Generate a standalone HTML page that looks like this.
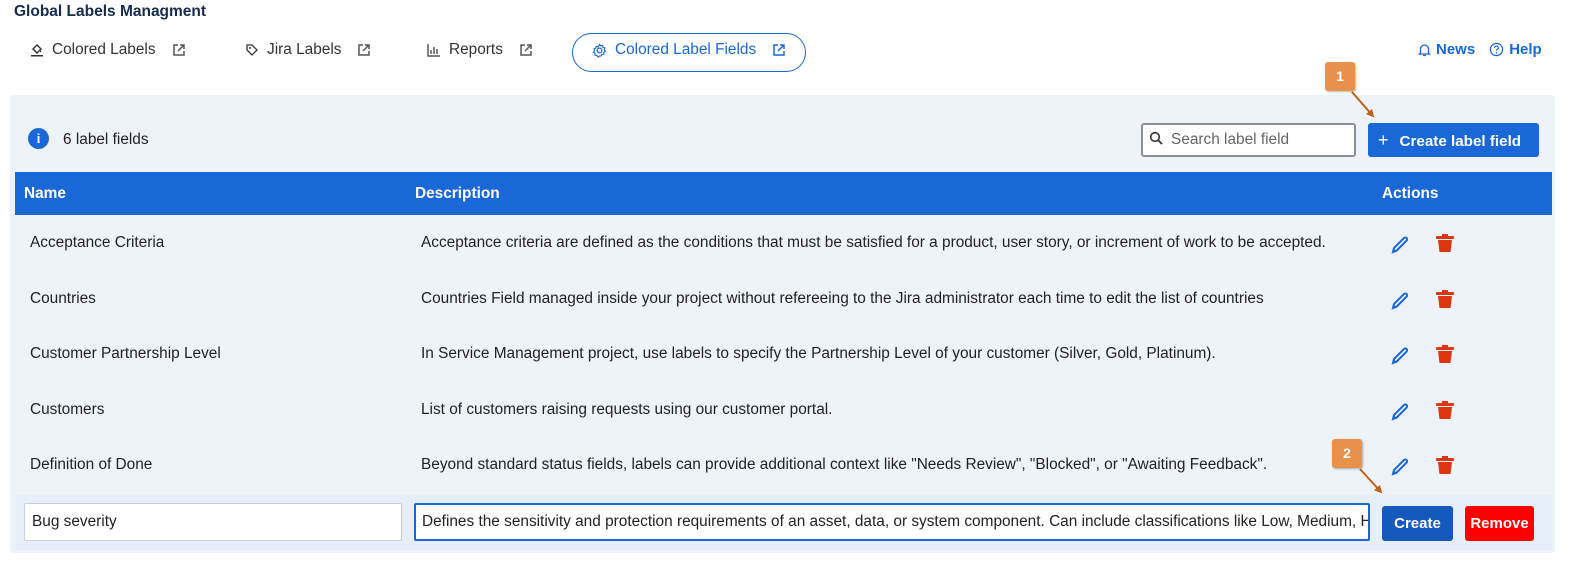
<!DOCTYPE html>
<html><head><meta charset="utf-8"><style>
*{box-sizing:border-box;margin:0;padding:0}
body{width:1591px;height:579px;background:#fff;font-family:"Liberation Sans",sans-serif;color:#172b4d;position:relative;overflow:hidden;font-size:15.4px}
.abs{position:absolute}
.title{left:14px;top:3px;font-size:15.5px;font-weight:bold;color:#172b4d}
.tab{top:41px;font-size:15.4px;color:#333;display:flex;align-items:center;gap:8px;white-space:nowrap}
.pill{left:572px;top:33px;width:234px;height:39px;border:1px solid #1a68d8;border-radius:20px}
.panel{left:10px;top:95px;width:1545px;height:458px;background:#eef3fa;border-radius:4px}
.hdr{left:15px;top:172px;width:1537px;height:43px;background:#1a68d8;color:#fff;font-weight:bold;font-size:15.4px}
.hdr span{position:absolute;top:13px}
.row{left:30px;font-size:15.4px;color:#222}
.desc{left:421px;font-size:15.4px;color:#222;white-space:nowrap}
.badge{width:30px;height:29px;background:#e8914a;border-radius:3px;color:#fff;font-weight:bold;font-size:14px;text-align:center;line-height:29px;box-shadow:1px 1px 2px rgba(0,0,0,.3)}
</style></head><body>
<div class="abs title">Global Labels Managment</div>

<div class="abs tab" style="left:30px"><svg width="14" height="14" viewBox="0 0 14 14"><path d="M3 6l4-4 4 4-4 4z" fill="none" stroke="#333" stroke-width="1.4"/><path d="M10 8.5c0 1 1.5 1 1.5 0l-.75-1.5z" fill="#333"/><rect x="1" y="12" width="12" height="1.5" fill="#333"/></svg>Colored Labels<svg width="14" height="14" viewBox="0 0 14 14" style="margin-left:8px"><path d="M6 2H2v10h10V8M8 2h4v4M12 2L6 8" fill="none" stroke="#555" stroke-width="1.5"/></svg></div>
<div class="abs tab" style="left:245px"><svg width="14" height="14" viewBox="0 0 14 14"><path d="M2 2h5l5 5-5 5-5-5z" fill="none" stroke="#333" stroke-width="1.3"/><circle cx="5" cy="5" r="1" fill="#333"/></svg>Jira Labels<svg width="14" height="14" viewBox="0 0 14 14" style="margin-left:8px"><path d="M6 2H2v10h10V8M8 2h4v4M12 2L6 8" fill="none" stroke="#555" stroke-width="1.5"/></svg></div>
<div class="abs tab" style="left:427px"><svg width="14" height="14" viewBox="0 0 14 14"><path d="M1 1v12h12M4 11V7M7 11V4M10 11V6" fill="none" stroke="#333" stroke-width="1.2"/></svg>Reports<svg width="14" height="14" viewBox="0 0 14 14" style="margin-left:8px"><path d="M6 2H2v10h10V8M8 2h4v4M12 2L6 8" fill="none" stroke="#555" stroke-width="1.5"/></svg></div>
<div class="abs pill"></div>
<div class="abs tab" style="left:592px;color:#1a68d8"><svg width="15" height="15" viewBox="0 0 16 16"><circle cx="8" cy="8" r="2.5" fill="none" stroke="#1a68d8" stroke-width="1.3"/><path d="M8 1.5l1.3 1.6 2-.6.4 2 2 .7-.7 2 1.2 1.6-1.7 1.1.1 2.1-2.1.1-1.1 1.8L8 13.9l-1.6 1.1-1.1-1.8-2.1-.1.1-2.1L1.6 9.9l1.2-1.6-.7-2 2-.7.4-2 2 .6z" fill="none" stroke="#1a68d8" stroke-width="1.2"/></svg>Colored Label Fields<svg width="14" height="14" viewBox="0 0 14 14" style="margin-left:8px"><path d="M6 2H2v10h10V8M8 2h4v4M12 2L6 8" fill="none" stroke="#1a68d8" stroke-width="1.5"/></svg></div>

<div class="abs" style="left:1418px;top:41px;color:#1a68d8;font-weight:bold;font-size:15px;display:flex;gap:5px;align-items:center"><svg width="13" height="14" viewBox="0 0 13 14"><path d="M2.5 10V6a4 4 0 018 0v4l1 1H1.5z M5 12.5h3" fill="none" stroke="#1a68d8" stroke-width="1.3"/></svg>News<span style="width:4px"></span><svg width="15" height="15" viewBox="0 0 16 16"><circle cx="8" cy="8" r="6.5" fill="none" stroke="#1a68d8" stroke-width="1.3"/><path d="M6 6.3a2 2 0 114 .2c0 1.3-2 1.3-2 2.8" fill="none" stroke="#1a68d8" stroke-width="1.3"/><circle cx="8" cy="11.5" r=".9" fill="#1a68d8"/></svg>Help</div>

<div class="abs panel"></div>
<div class="abs" style="left:28px;top:128px;width:21px;height:21px;border-radius:50%;background:#1a68d8;color:#fff;font-weight:bold;font-size:13px;text-align:center;line-height:21px">i</div>
<div class="abs" style="left:63px;top:131px;font-size:15.4px;color:#222">6 label fields</div>
<div class="abs" style="left:1141px;top:123px;width:215px;height:34px;border:2px solid #8a8f99;border-radius:3px;background:#fff"></div>
<svg class="abs" style="left:1149px;top:131px" width="14" height="14" viewBox="0 0 14 14"><circle cx="6" cy="6" r="4.3" fill="none" stroke="#333" stroke-width="1.6"/><path d="M9.2 9.2L13 13" stroke="#333" stroke-width="1.8"/></svg>
<div class="abs" style="left:1171px;top:131px;color:#666;font-size:15.4px">Search label field</div>
<div class="abs" style="left:1368px;top:123px;width:171px;height:34px;background:#1a68d8;border-radius:3px;color:#fff;font-weight:bold;font-size:15.2px;line-height:34px;padding-left:10px;white-space:nowrap"><span style="font-size:18px;font-weight:normal;margin-right:11px">+</span>Create label field</div>

<div class="abs hdr"><span style="left:9px">Name</span><span style="left:400px">Description</span><span style="left:1367px">Actions</span></div>

<div class="abs row" style="top:234px">Acceptance Criteria</div>
<div class="abs desc" style="top:234px">Acceptance criteria are defined as the conditions that must be satisfied for a product, user story, or increment of work to be accepted.</div>
<div class="abs row" style="top:290px">Countries</div>
<div class="abs desc" style="top:290px">Countries Field managed inside your project without refereeing to the Jira administrator each time to edit the list of countries</div>
<div class="abs row" style="top:345px">Customer Partnership Level</div>
<div class="abs desc" style="top:345px">In Service Management project, use labels to specify the Partnership Level of your customer (Silver, Gold, Platinum).</div>
<div class="abs row" style="top:401px">Customers</div>
<div class="abs desc" style="top:401px">List of customers raising requests using our customer portal.</div>
<div class="abs row" style="top:456px">Definition of Done</div>
<div class="abs desc" style="top:456px">Beyond standard status fields, labels can provide additional context like "Needs Review", "Blocked", or "Awaiting Feedback".</div>

<svg class="abs" style="left:0;top:0" width="1591" height="579">
<defs>
<g id="pen"><path d="M2 18l1-4L13 4a1.8 1.8 0 012.6 2.6L5.6 16.6z" fill="none" stroke="#1a68d8" stroke-width="2"/><path d="M1.5 19l1.5-4.5 3 3z" fill="#1a68d8"/></g>
<g id="bin"><rect x="0" y="2" width="18" height="3" rx="1" fill="#dd3510"/><rect x="6" y="0" width="6" height="3" fill="#dd3510"/><path d="M2 6h14l-1.5 12h-11z" fill="#dd3510"/></g>
<marker id="ar" markerWidth="8" markerHeight="8" refX="6" refY="4" orient="auto" markerUnits="userSpaceOnUse"><path d="M0 0L8 4 0 8z" fill="#c0601a"/></marker>
</defs>
<use href="#pen" x="1391" y="234"/><use href="#bin" x="1436" y="234"/>
<use href="#pen" x="1391" y="290"/><use href="#bin" x="1436" y="290"/>
<use href="#pen" x="1391" y="345"/><use href="#bin" x="1436" y="345"/>
<use href="#pen" x="1391" y="401"/><use href="#bin" x="1436" y="401"/>
<use href="#pen" x="1391" y="456"/><use href="#bin" x="1436" y="456"/>
<rect x="15" y="495" width="1537" height="55" fill="#e6eef8"/>
<line x1="1352" y1="92" x2="1373" y2="116" stroke="#c0601a" stroke-width="2" marker-end="url(#ar)"/>
<line x1="1360" y1="469" x2="1381" y2="492" stroke="#c0601a" stroke-width="2" marker-end="url(#ar)"/>
</svg>
<div class="abs badge" style="left:1325px;top:62px">1</div>
<div class="abs badge" style="left:1332px;top:439px">2</div>

<div class="abs" style="left:24px;top:503px;width:378px;height:38px;background:#fff;border:1px solid #ccd;border-radius:2px;padding:9px 7px;font-size:15.4px;color:#222">Bug severity</div>
<div class="abs" style="left:414px;top:503px;width:956px;height:38px;background:#fff;border:2px solid #1a68d8;border-radius:2px;padding:8px 6px;font-size:15.4px;color:#222;white-space:nowrap;overflow:hidden">Defines the sensitivity and protection requirements of an asset, data, or system component. Can include classifications like Low, Medium, High</div>
<div class="abs" style="left:1382px;top:506px;width:71px;height:35px;background:#1559bd;border-radius:3px;color:#fff;font-weight:bold;font-size:15px;text-align:center;line-height:35px">Create</div>
<div class="abs" style="left:1465px;top:506px;width:69px;height:35px;background:#ff0000;border-radius:3px;color:#fff;font-weight:bold;font-size:15px;text-align:center;line-height:35px">Remove</div>
</body></html>
